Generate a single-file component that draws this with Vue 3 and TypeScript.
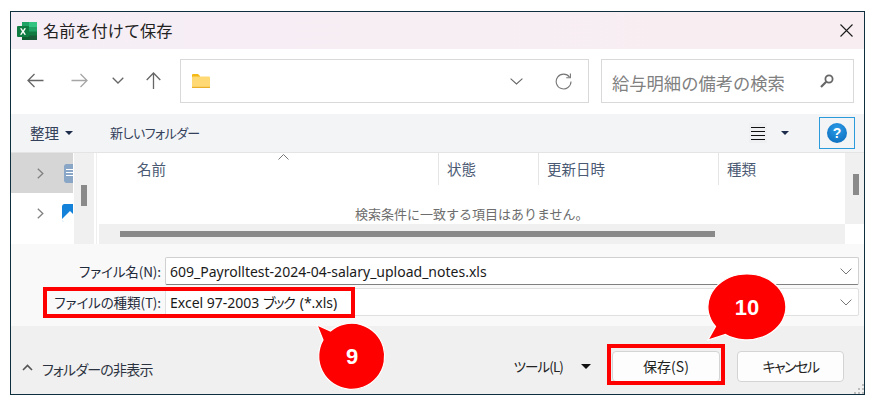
<script setup lang="ts">
const columns: { label: string; width: number; pad: number }[] = [
  { label: '名前', width: 340, pad: 38 },
  { label: '状態', width: 100, pad: 8 },
  { label: '更新日時', width: 180, pad: 8 },
  { label: '種類', width: 126, pad: 8 },
]
const gripDots: [number, number][] = [
  [8, 0], [4, 4], [8, 4], [0, 8], [4, 8], [8, 8],
]
</script>

<template>
  <div class="win">
    <header class="titlebar">
      <svg class="xl" width="20" height="18" viewBox="0 0 20 18">
        <rect x="5" y="0" width="15" height="18" rx="1" fill="#107c41" />
        <rect x="5" y="0" width="15" height="5" fill="#21a366" />
        <rect x="12" y="0" width="8" height="5" fill="#33c481" />
        <rect x="12" y="5" width="8" height="4.5" fill="#21a366" />
        <rect x="12" y="13.5" width="8" height="4.5" fill="#185c37" />
        <rect x="5" y="13.5" width="7" height="4.5" fill="#0e5c2f" />
        <rect x="0" y="4" width="12" height="11" rx="1" fill="#107c41" />
        <path d="M3 6.3h1.7L6 8.6l1.3-2.3H9L7 9.5l2 3.2H7.3L6 10.4l-1.3 2.3H3l2-3.2z" fill="#fff" />
      </svg>
      <span class="title">名前を付けて保存</span>
      <svg class="close" width="13" height="13" viewBox="0 0 13 13">
        <path d="M.5.5l12 12M12.5.5l-12 12" stroke="#1a1a1a" stroke-width="1.1" fill="none" />
      </svg>
    </header>

    <section class="toolbar">
      <div class="navbtns">
        <svg width="17" height="15" viewBox="0 0 17 15"><path d="M16.5 7.5H1.2M7.5 1L1 7.5 7.5 14" fill="none" stroke="#666" stroke-width="1.3" /></svg>
        <svg class="fwd" width="17" height="15" viewBox="0 0 17 15"><path d="M.5 7.5h15.3M9.5 1L16 7.5 9.5 14" fill="none" stroke="#a6a6a6" stroke-width="1.3" /></svg>
        <svg class="down" width="12" height="7" viewBox="0 0 12 7"><path d="M.7.7L6 6l5.3-5.3" fill="none" stroke="#666" stroke-width="1.3" /></svg>
        <svg class="up" width="15" height="17" viewBox="0 0 15 17"><path d="M7.5 17V1.2M.7 8L7.5 1l6.8 7" fill="none" stroke="#666" stroke-width="1.3" /></svg>
      </div>
      <div class="addr">
        <svg class="folder" width="18" height="14" viewBox="0 0 18 14">
          <path d="M0 1a1 1 0 0 1 1-1h5l2 2v3H0z" fill="#f5b915" />
          <rect x="0" y="2.6" width="18" height="11.4" rx="1" fill="#ffd974" />
          <rect x="0" y="12.8" width="18" height="1.2" fill="#eaaf2a" />
        </svg>
        <svg class="addr-chev" width="13" height="7" viewBox="0 0 13 7"><path d="M.6.6L6.5 6 12.4.6" fill="none" stroke="#666" stroke-width="1.1" /></svg>
        <svg class="refresh" width="17" height="17" viewBox="0 0 17 17">
          <path d="M14.6 4.2A7.4 7.4 0 1 0 16 8.5" fill="none" stroke="#777" stroke-width="1.1" />
          <path d="M15.4.6v4.2h-4.2" fill="none" stroke="#777" stroke-width="1.1" />
        </svg>
      </div>
      <div class="search">
        <span class="search-text">給与明細の備考の検索</span>
        <svg width="14" height="14" viewBox="0 0 14 14">
          <circle cx="9" cy="5" r="3.6" fill="none" stroke="#666" stroke-width="1.8" />
          <path d="M6.2 7.8L1 13" stroke="#666" stroke-width="2.2" fill="none" />
        </svg>
      </div>
    </section>

    <section class="commands">
      <span class="cmd organize">整理</span>
      <i class="caret navy"></i>
      <span class="cmd newfolder">新しいフォルダー</span>
      <span class="spacer"></span>
      <span class="viewicon"><i></i><i></i><i></i><i></i></span>
      <i class="caret navy viewcaret"></i>
      <span class="help"><b>?</b></span>
    </section>

    <section class="content">
      <aside class="tree">
        <div class="treerow selected">
          <svg width="7" height="11" viewBox="0 0 7 11"><path d="M.8.8L5.8 5.5.8 10.2" fill="none" stroke="#808080" stroke-width="1.3" /></svg>
          <svg class="tree-ico" width="9" height="19" viewBox="0 0 9 19">
            <rect width="12" height="19" rx="2" fill="#8aa6c6" />
            <path d="M2 5.5h7M2 8.5h7M2 11.5h7" stroke="#fff" stroke-width="1.2" />
          </svg>
        </div>
        <div class="treerow">
          <svg width="7" height="11" viewBox="0 0 7 11"><path d="M.8.8L5.8 5.5.8 10.2" fill="none" stroke="#808080" stroke-width="1.3" /></svg>
          <svg class="tree-ico pic" width="11" height="18" viewBox="0 0 11 18">
            <rect width="14" height="18" rx="2" fill="#1382d8" />
            <path d="M0 18v-3l8-8 6 6v5z" fill="#fff" />
          </svg>
        </div>
      </aside>
      <div class="treebar"><span class="thumb-v"></span></div>
      <div class="gap"></div>
      <div class="files">
        <div class="files-top">
          <div class="list">
            <div class="heads">
              <span
                v-for="c in columns"
                :key="c.label"
                class="head"
                :style="{ width: c.width + 'px', paddingLeft: c.pad + 'px' }"
              >{{ c.label }}</span>
              <svg class="sort" width="11" height="6" viewBox="0 0 11 6"><path d="M.5 5.5l5-5 5 5" fill="none" stroke="#777" /></svg>
            </div>
            <p class="empty">検索条件に一致する項目はありません。</p>
          </div>
          <div class="listbar"><span class="thumb-r"></span></div>
        </div>
        <div class="hrow">
          <div class="hbar"><span class="thumb-h"></span></div>
        </div>
      </div>
    </section>

    <section class="form">
      <div class="row">
        <label class="lab">ファイル名(N):</label>
        <div class="input strong">
          <span>609_Payrolltest-2024-04-salary_upload_notes.xls</span>
          <svg width="12" height="7" viewBox="0 0 12 7"><path d="M.6.6L6 6 11.4.6" fill="none" stroke="#777" /></svg>
        </div>
      </div>
      <div class="row">
        <label class="lab">ファイルの種類(T):</label>
        <div class="input">
          <span>Excel 97-2003 <span class="kana">ブック</span> (*.xls)</span>
          <svg width="12" height="7" viewBox="0 0 12 7"><path d="M.6.6L6 6 11.4.6" fill="none" stroke="#777" /></svg>
        </div>
      </div>
    </section>

    <footer class="footer">
      <div class="toggle">
        <svg width="11" height="7" viewBox="0 0 11 7"><path d="M1 6l4.5-4.5L10 6" fill="none" stroke="#555" stroke-width="1.6" /></svg>
        <span>フォルダーの非表示</span>
      </div>
      <span class="spacer"></span>
      <span class="tools">ツール(L)</span>
      <i class="caret black"></i>
      <button class="btn save">保存(S)</button>
      <button class="btn cancel">キャンセル</button>
      <svg class="grip" width="10" height="10" viewBox="0 0 10 10">
        <rect v-for="(d, i) in gripDots" :key="i" :x="d[0]" :y="d[1]" width="2" height="2" fill="#bdbdbd" />
      </svg>
    </footer>

    <div class="mark mark-type"></div>
    <div class="mark mark-save"></div>

    <svg class="bubble b9" width="72" height="68" viewBox="0 0 72 68">
      <path d="M1 1L14.5 7A33 33 0 1 1 7 16Z" fill="#f00" stroke="#fff" stroke-width="1.2" />
      <text x="36" y="40" text-anchor="middle" class="bubble-text">9</text>
    </svg>
    <svg class="bubble b10" width="86" height="72" viewBox="0 0 86 72">
      <path d="M6 70L13.5 56.5A39 33 0 1 1 23.5 64.5Z" fill="#f00" stroke="#fff" stroke-width="1.2" />
      <text x="45" y="45" text-anchor="middle" class="bubble-text">10</text>
    </svg>
  </div>
</template>

<style>
html, body { margin: 0; background: #fff; }
</style>

<style scoped>
.win {
  position: relative;
  box-sizing: border-box;
  width: 855px;
  height: 384px;
  margin: 11px 0 0 10px;
  border: 1px solid #0e2f3e;
  display: flex;
  flex-direction: column;
  background: #fff;
  font-family: "Noto Sans CJK JP", "Noto Sans", sans-serif;
  color: #1c1c1c;
  overflow: visible;
}
.titlebar {
  height: 37px;
  display: flex;
  align-items: center;
  padding-left: 6px;
  background: linear-gradient(90deg, #f6eef6, #f8eef1);
  flex: none;
}
.xl { flex: none; margin-right: 6px; }
.title { font-size: 16.2px; line-height: 20px; color: #222; margin-top: -2px; }
.close { margin-left: auto; margin-right: 11px; }

.toolbar {
  height: 65px;
  flex: none;
  display: flex;
  align-items: flex-start;
  padding: 10px 10px 0 0;
  box-sizing: border-box;
}
.navbtns {
  width: 169px;
  height: 42px;
  display: flex;
  align-items: center;
  padding-left: 16px;
  box-sizing: border-box;
  flex: none;
}
.fwd { margin-left: 27px; }
.down { margin-left: 24px; }
.up { margin-left: 22px; }
.addr {
  width: 409px;
  height: 44px;
  box-sizing: border-box;
  border: 1px solid #d9d9d9;
  display: flex;
  align-items: center;
  padding-left: 11px;
  flex: none;
}
.addr-chev { margin-left: auto; }
.refresh { margin: 0 16px 0 32px; }
.search {
  width: 253px;
  height: 44px;
  box-sizing: border-box;
  border: 1px solid #d9d9d9;
  margin-left: 12px;
  display: flex;
  align-items: center;
  justify-content: space-between;
  padding: 0 19px 0 10px;
  flex: none;
}
.search-text { font-size: 17.3px; line-height: 22px; color: #808080; white-space: nowrap; padding-top: 4px; }

.commands {
  height: 39px;
  flex: none;
  box-sizing: border-box;
  background: #f3f4f6;
  border-bottom: 1px solid #e4e4e4;
  display: flex;
  align-items: center;
  padding: 0 9px 0 19px;
}
.cmd { font-size: 14.5px; line-height: 20px; color: #33415a; white-space: nowrap; }
.newfolder {
  font-size: 13px;
  letter-spacing: -0.55px;
  margin-left: 37px;
  font-feature-settings: "palt";
}
.caret {
  display: block;
  width: 0;
  height: 0;
  border-left: 4px solid transparent;
  border-right: 4px solid transparent;
  border-top: 4px solid #1d2c4a;
  margin-left: 6px;
}
.caret.black { border-top-color: #111; border-left-width: 5px; border-right-width: 5px; border-top-width: 5px; margin: 0 0 0 18px; }
.spacer { flex: 1; }
.viewicon {
  display: flex;
  flex-direction: column;
  gap: 3px;
  width: 14px;
  padding: 4px 2px 3px;
  background: #eff0f2;
}
.viewicon i { display: block; height: 1px; background: #111; }
.viewcaret { margin: 0 30px 0 14px; }
.help {
  width: 36px;
  height: 32px;
  box-sizing: border-box;
  border: 1px solid #2b9bdc;
  display: flex;
  align-items: center;
  justify-content: center;
}
.help b {
  width: 20px;
  height: 20px;
  border-radius: 50%;
  background: radial-gradient(circle at 50% 30%, #2b9ce8, #0a68b8);
  color: #fff;
  font: 700 14px/20px "Liberation Sans", sans-serif;
  text-align: center;
}

.content { height: 91px; flex: none; display: flex; background: #fff; }
.tree { width: 62px; flex: none; }
.treerow {
  height: 40px;
  display: flex;
  align-items: center;
  padding-left: 26px;
  overflow: hidden;
}
.treerow.selected { background: #d6d6d6; }
.tree-ico { margin-left: 20px; border-radius: 2px 0 0 2px; }
.tree-ico.pic { margin-left: 18px; }
.treebar {
  width: 20px;
  margin-left: 1px;
  background: #f0f0f0;
  flex: none;
  position: relative;
  display: flex;
  justify-content: center;
  padding-top: 32px;
  box-sizing: border-box;
}
.thumb-v { display: block; width: 6px; height: 21px; background: #8a8a8a; }
.gap { width: 5px; flex: none; background: linear-gradient(90deg, #fff 2px, #efefef 2px, #efefef 3px, #fff 3px); }
.files { width: 765px; display: flex; flex-direction: column; }
.files-top { flex: 1; min-height: 0; display: flex; overflow: hidden; }
.list { width: 746px; flex: none; position: relative; }
.heads { display: flex; height: 32px; position: relative; }
.head {
  box-sizing: border-box;
  border-right: 1px solid #e5e5e5;
  font-size: 14.5px;
  line-height: 32px;
  color: #4b5a73;
  white-space: nowrap;
}
.head:last-of-type { border-right: 0; }
.sort { position: absolute; left: 179px; top: 1px; }
.empty {
  margin: 20px 0 0;
  font-size: 13px;
  line-height: 18px;
  color: #6d6d6d;
  padding-left: 256px;
  white-space: nowrap;
}
.listbar { flex: 1; background: #f0f0f0; padding: 21px 0 0 8px; box-sizing: border-box; }
.thumb-r { display: block; width: 6px; height: 21px; background: #8a8a8a; }
.hrow { height: 20px; flex: none; display: flex; }
.hbar { width: 746px; background: #f0f0f0; display: flex; align-items: center; padding-left: 21px; box-sizing: border-box; }
.thumb-h { display: block; width: 595px; height: 6px; background: #8a8a8a; }

.form {
  height: 82px;
  flex: none;
  box-sizing: border-box;
  background: #f9f9f9;
  padding: 13px 5px 0 0;
  display: flex;
  flex-direction: column;
  gap: 3px;
}
.row { display: flex; align-items: stretch; height: 28px; }
.lab {
  width: 150px;
  flex: none;
  text-align: right;
  font-size: 13.5px;
  line-height: 28px;
  color: #1f2a3a;
  white-space: nowrap;
  font-feature-settings: "palt";
  letter-spacing: -0.1px;
  margin-right: 4px;
}
.input {
  flex: 1;
  box-sizing: border-box;
  border: 1px solid #e0e0e0;
  border-radius: 2px;
  background: #fff;
  display: flex;
  align-items: center;
  justify-content: space-between;
  padding: 0 6px 0 4px;
  font-size: 14px;
  color: #1a1a1a;
  white-space: nowrap;
  font-family: "Noto Sans", "Noto Sans CJK JP", sans-serif;
}
.input.strong { border-color: #d0d0d0; border-bottom-color: #808080; }
.kana { font-feature-settings: "palt"; letter-spacing: -1.6px; margin-right: 2px; }

.footer {
  flex: 1;
  min-height: 0;
  position: relative;
  background: #f0f0f0;
  display: flex;
  align-items: center;
  padding: 0 20px 0 11px;
  box-sizing: border-box;
}
.toggle { display: flex; align-items: center; gap: 9px; font-size: 14px; color: #2c3340; margin-top: 17px; }
.toggle span { letter-spacing: -0.8px; font-feature-settings: "palt"; line-height: 20px; }
.toggle svg { margin-top: -2px; }
.tools { font-size: 13.5px; line-height: 20px; color: #222; margin-top: 12px; font-feature-settings: "palt"; letter-spacing: -0.9px; }
.footer .caret.black { margin-top: 12px; }
.btn {
  box-sizing: border-box;
  height: 31px;
  margin-top: 12px;
  border: 1px solid #d4d4d4;
  border-radius: 4px;
  background: #fdfdfd;
  font-family: inherit;
  font-size: 14px;
  line-height: 18px;
  color: #222;
  padding: 0;
  font-feature-settings: "palt";
}
.save { width: 108px; margin-left: 21px; }
.cancel { width: 107px; margin-left: 17px; letter-spacing: -1.5px; }
.grip { position: absolute; right: 0; bottom: 0; }

.mark { position: absolute; box-sizing: border-box; border: 4px solid #f00; pointer-events: none; }
.mark-type { left: 32px; top: 275px; width: 312px; height: 31px; }
.mark-save { left: 596px; top: 332px; width: 118px; height: 41px; }
.bubble { position: absolute; overflow: visible; }
.b9 { left: 305px; top: 312px; }
.b10 { left: 691px; top: 258px; }
.bubble-text { font: 700 22px "Liberation Sans", sans-serif; fill: #fff; }
</style>
